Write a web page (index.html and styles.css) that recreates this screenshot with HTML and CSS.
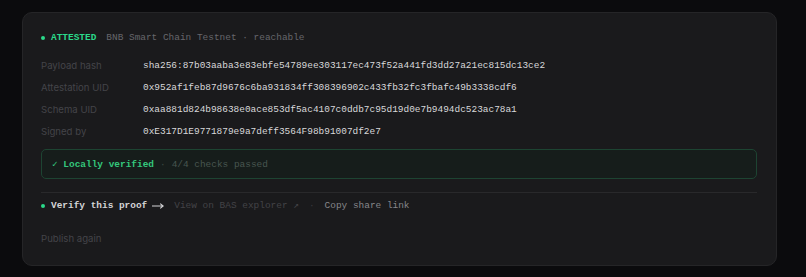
FILE: index.html
```html
<!DOCTYPE html>
<html lang="en">
<head>
<meta charset="utf-8">
<link rel="stylesheet" href="styles.css">
</head>
<body>
<div class="card">
  <div class="header">
    <span class="dot"></span>
    <span class="status">ATTESTED</span>
    <span class="chain">BNB Smart Chain Testnet · reachable</span>
  </div>
  <div class="rows">
    <div class="row"><span class="label">Payload hash</span><span class="value">sha256:87b03aaba3e83ebfe54789ee303117ec473f52a441fd3dd27a21ec815dc13ce2</span></div>
    <div class="row"><span class="label">Attestation UID</span><span class="value">0x952af1feb87d9676c6ba931834ff308396902c433fb32fc3fbafc49b3338cdf6</span></div>
    <div class="row"><span class="label">Schema UID</span><span class="value">0xaa881d824b98638e0ace853df5ac4107c0ddb7c95d19d0e7b9494dc523ac78a1</span></div>
    <div class="row"><span class="label">Signed by</span><span class="value">0xE317D1E9771879e9a7deff3564F98b91007df2e7</span></div>
  </div>
  <div class="verified">
    <span class="ok">✓ Locally verified</span>
    <span class="sep">·</span>
    <span class="checks">4/4 checks passed</span>
  </div>
  <div class="actions">
    <span class="dot"></span>
    <span class="verify">Verify this proof</span>
    <svg class="arrow" width="12" height="6" viewBox="0 0 12 6" aria-hidden="true"><path d="M0 3H11M8.2 0.6L11.2 3L8.2 5.4" fill="none" stroke="#d4d4d6" stroke-width="1.1"/></svg>
    <span class="explorer">View on BAS explorer ↗</span>
    <span class="sep2">·</span>
    <span class="copy">Copy share link</span>
  </div>
  <div class="publish">Publish again</div>
</div>
</body>
</html>
```
FILE: styles.css
```css
* { box-sizing: border-box; }
html, body { margin: 0; padding: 0; }
body {
  background: #0b0b0d;
  width: 806px;
  height: 277px;
  padding: 12px 29px 11px 22px;
  font-family: "Liberation Mono", monospace;
}
.card {
  width: 755px;
  height: 254px;
  background: #1a1a1c;
  border: 1px solid #252527;
  border-radius: 10px;
  padding: 18px 19px 0 18px;
  display: flex;
  flex-direction: column;
}
.header {
  display: flex;
  align-items: center;
  height: 14px;
  font-size: 9.45px;
  line-height: 14px;
}
.dot {
  width: 4px;
  height: 4px;
  border-radius: 50%;
  background: #2ad98a;
  margin-right: 6px;
  flex: none;
}
.status {
  color: #2bd98b;
  font-weight: bold;
  margin-right: 10px;
}
.chain { color: #66666b; }
.rows {
  margin-top: 9.5px;
  display: flex;
  flex-direction: column;
}
.row {
  display: flex;
  align-items: center;
  height: 22px;
}
.label {
  width: 102px;
  flex: none;
  font-family: Inter, "Noto Sans", sans-serif;
  font-size: 9.6px;
  color: #444449;
}
.value {
  font-size: 9.45px;
  color: #d8d8da;
}
.verified {
  margin-top: 6.5px;
  height: 30px;
  border: 1px solid #1d4432;
  background: #161d1b;
  border-radius: 5px;
  display: flex;
  align-items: center;
  padding-left: 10px;
  font-size: 9.45px;
}
.ok { color: #34c77c; font-weight: bold; }
.sep { color: #3c4a44; margin: 0 6px; }
.checks { color: #485650; }
.actions {
  margin-top: 13px;
  border-top: 1px solid #29292b;
  padding-top: 6px;
  height: 21px;
  display: flex;
  align-items: center;
  font-size: 9.45px;
  line-height: 14px;
}
.verify { color: #d4d4d6; font-weight: bold; margin-right: 5px; }
.arrow { flex: none; margin-right: 10px; }
.explorer { color: #434347; }
.sep2 { color: #39393c; margin: 0 10px; }
.copy { color: #86868a; }
.publish {
  margin-top: 19px;
  font-family: Inter, "Noto Sans", sans-serif;
  font-size: 9.6px;
  line-height: 14px;
  color: #444449;
}
```
